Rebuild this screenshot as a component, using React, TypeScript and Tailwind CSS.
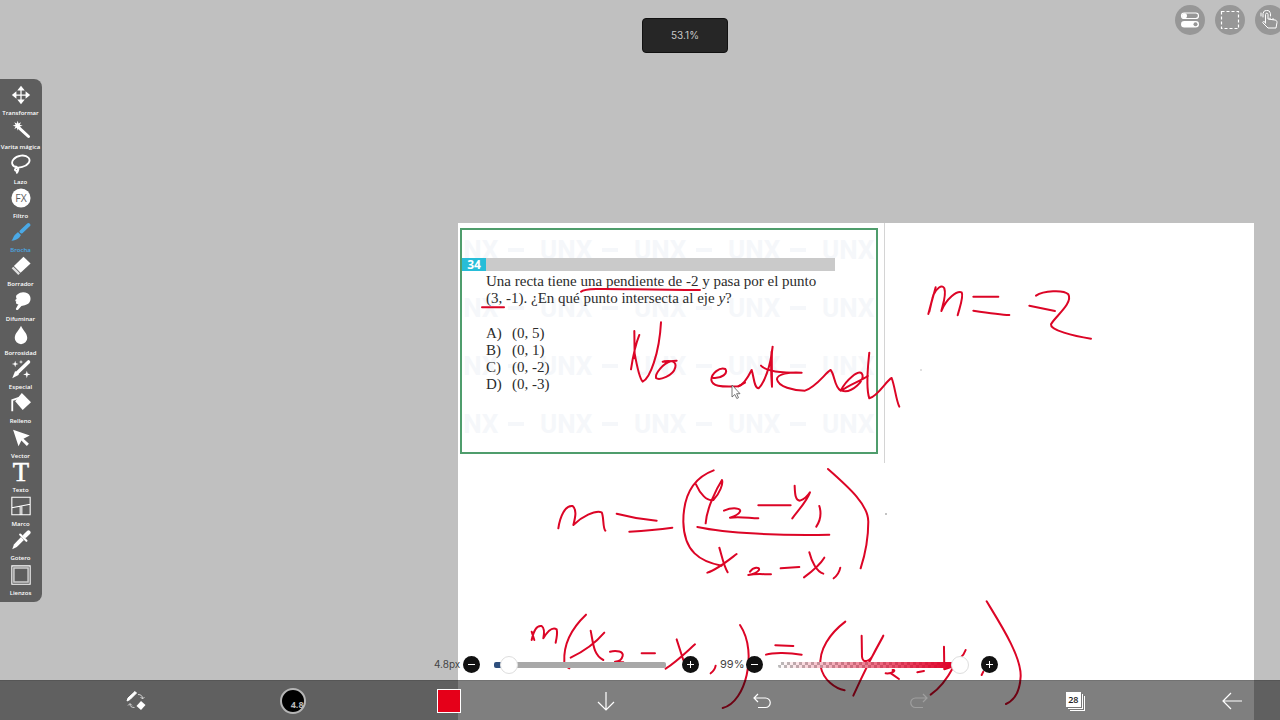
import React, { useState } from "react";

type Tool = { label: string; icon: React.ReactNode };

const TOOLS: Tool[] = [
  {
    label: "Transformar",
    icon: (
      <>
        <path d="M12 5v14M5 12h14" stroke="currentColor" strokeWidth="1.500" />
        <path d="M12 1l4.500 5.500h-9zM12 23l4.500-5.500h-9zM1 12l5.500-4.500v9zM23 12l-5.500-4.500v9z" fill="currentColor" />
      </>
    ),
  },
  {
    label: "Varita mágica",
    icon: (
      <>
        <path d="M10 11l11 10" stroke="currentColor" strokeWidth="3.600" strokeLinecap="round" />
        <path
          d="M8 2l1 3.500 3-1.500-1.500 3 3.500 1-3.500 1 1.500 3-3-1.500-1 3.500-1-3.500-3 1.500 1.500-3-3.500-1 3.500-1-1.500-3 3 1.500z"
          fill="currentColor"
        />
      </>
    ),
  },
  {
    label: "Lazo",
    icon: (
      <path
        d="M7 16C1 15 0 10 3 6.500 7 1.500 17 0 21 4.500c3.500 4-1 9.500-7.500 11-3 .8-7 .8-8.500 2.500-1 2 1.500 3 3 2 2-1.500 0-4-2-5M8 19c1 1.500 0 2.500-1 3.500"
        fill="none"
        stroke="currentColor"
        strokeWidth="2.200"
        strokeLinecap="round"
      />
    ),
  },
  {
    label: "Filtro",
    icon: (
      <>
        <circle cx="12" cy="12" r="11.500" fill="currentColor" />
        <text x="12" y="16.500" textAnchor="middle" fontSize="12.500" fontWeight="400" fill="#5e5e5e">
          FX
        </text>
      </>
    ),
  },
  {
    label: "Brocha",
    icon: (
      <>
        <path d="M12.500 11.500l8.500-8" stroke="currentColor" strokeWidth="4.500" strokeLinecap="round" />
        <path d="M8.500 12l3.500 3.500-2 3c-2 2-6 4-9.500 4 2-2 2-5 4-7z" fill="currentColor" />
        <path d="M9 12l3.500 3.500" stroke="#5e5e5e" strokeWidth="0.800" />
      </>
    ),
  },
  {
    label: "Borrador",
    icon: (
      <>
        <path d="M15 1l8.500 8-12 11-8-8z" fill="currentColor" />
        <path d="M2.800 12.800l8 8-2 2L.800 14.800z" fill="currentColor" opacity="0.800" />
      </>
    ),
  },
  {
    label: "Difuminar",
    icon: (
      <path
        d="M8 4c4-4 13-3 15 2.500 1.500 5-1 9.500-6.500 10.500l-4 1-4 4.500c-1.500 1-3 0-2.500-1.500L9 15.500c-2 1-4-1-2.500-2.500-2-1-1.500-3 .3-3.500C5.500 7 6 5 8 4z"
        fill="currentColor"
      />
    ),
  },
  {
    label: "Borrosidad",
    icon: <path d="M12 1c2 5 7.500 9 7.500 14.500a7.500 7.500 0 01-15 0C4.500 10 10 6 12 1z" fill="currentColor" />,
  },
  {
    label: "Especial",
    icon: (
      <>
        <path d="M7 17L21 3.500" stroke="currentColor" strokeWidth="4.200" strokeLinecap="round" />
        <path d="M5 14.500l4.500 4.500L1.500 23z" fill="currentColor" />
        <path
          d="M5 2l.9 3.100L9 6l-3.100.9L5 10l-.9-3.100L1 6l3.100-.9zM19 14l1 3.500 3.500 1-3.500 1-1 3.500-1-3.500-3.500-1 3.500-1zM12 1l.6 1.900 1.900.6-1.900.6L12 6l-.6-1.900-1.900-.6 1.900-.6z"
          fill="currentColor"
        />
      </>
    ),
  },
  {
    label: "Relleno",
    icon: (
      <>
        <path d="M13 0l11 11-10 9.500L5 10z" fill="currentColor" />
        <path d="M12 5L1.500 8.500V22" fill="none" stroke="currentColor" strokeWidth="2.200" />
      </>
    ),
  },
  {
    label: "Vector",
    icon: <path d="M2.500 2l20 7-7.500 4 6.500 6-2.500 2.500-6.500-6.500L9 22z" fill="currentColor" />,
  },
  {
    label: "Texto",
    icon: (
      <text
        x="12"
        y="22.500"
        textAnchor="middle"
        fontSize="32"
        fontWeight="400"
        fontFamily="'Liberation Serif', serif"
        fill="currentColor"
        stroke="currentColor"
        strokeWidth="0.700"
      >
        T
      </text>
    ),
  },
  {
    label: "Marco",
    icon: (
      <path
        d="M1 1.500h22v21H1zM1 14L23 10M11 12.500V22M13 12V22"
        fill="none"
        stroke="currentColor"
        strokeWidth="1.300"
      />
    ),
  },
  {
    label: "Gotero",
    icon: (
      <>
        <path d="M17 7l4-4" stroke="currentColor" strokeWidth="5" strokeLinecap="round" />
        <path d="M11 5.500l7.500 7.500" stroke="currentColor" strokeWidth="2.600" strokeLinecap="round" />
        <path d="M12 8.500l3.500 3.500L7 20.500 1.500 23 3.500 17.500z" fill="currentColor" />
      </>
    ),
  },
  {
    label: "Lienzos",
    icon: (
      <>
        <path d="M1 1h22v22H1z" fill="none" stroke="currentColor" strokeWidth="1.300" />
        <path d="M3.500 3.500h17v17h-17z" fill="none" stroke="currentColor" strokeWidth="1.800" opacity="0.700" />
      </>
    ),
  },
];

// Ink strokes, drawn at three times the canvas scale
const INK = [
  {
    x: 600,
    y: 220,
    strokes: [
      "M-57 215C-40 200 60 210 300 210",
      "M-354 262L-288 262",
      "M103 333L104 415M118 345C108 370 98 415 93 448M103 395C110 435 118 475 128 485C150 475 178 400 183 307",
      "M188 425L230 422M212 424C190 430 165 460 168 474C178 482 220 468 226 442C230 425 215 420 192 424",
      "M340 474C365 476 385 460 376 447C360 440 334 460 334 480C336 498 360 502 415 499C430 495 445 470 455 450C462 470 462 505 476 505C492 490 512 440 518 380C510 420 514 470 516 500",
      "M415 499L435 488M515 395L516 495",
      "M483 437C500 455 540 458 605 458C570 455 530 462 531 478C535 500 580 512 615 512C650 500 675 460 692 450C705 465 702 500 722 512C740 478 775 450 785 460C800 478 755 522 725 512C745 495 785 482 803 468",
      "M808 398C804 440 796 500 808 535C835 528 860 480 875 474C885 500 888 540 898 560",
    ],
  },
  {
    x: 900,
    y: 260,
    strokes: [
      "M107 82L85 162L100 105C110 85 125 72 133 85C140 105 128 135 124 153C140 115 170 92 185 97C192 110 178 145 173 166M88 155L98 112",
      "M220 110L295 110M220 152C260 158 300 164 328 165",
      "M388 137L465 153M408 107C430 92 490 88 505 103C520 130 465 170 453 193C450 210 520 228 573 236",
    ],
  },
  {
    x: 540,
    y: 455,
    strokes: [
      "M55 220C60 185 75 150 98 153C112 165 105 190 100 210C125 185 165 165 185 172C192 185 188 220 196 227",
      "M230 176Q290 192 350 197M268 230Q340 226 397 218",
      "M521 46C470 65 430 110 430 200C432 290 480 320 545 332",
      "M468 88C480 115 500 140 520 135C540 115 550 85 546 75C530 100 500 160 497 205",
      "M552 167C580 155 605 160 600 170C595 180 580 185 570 188C600 183 630 190 655 190M655 151L752 151",
      "M764 92C765 115 765 135 780 137C795 132 805 120 810 112C800 140 775 165 757 190",
      "M838 153C845 175 842 195 829 215M472 216C560 235 720 242 868 239",
      "M864 42C930 100 985 150 985 200C985 260 975 300 962 340",
      "M538 278C545 300 550 330 563 352M590 297C560 320 530 345 502 353",
      "M630 350C640 335 660 335 657 345C650 355 635 358 625 360C650 355 670 358 693 358M722 340L778 336",
      "M808 292C815 320 830 350 850 356M853 308C840 330 815 350 792 367M901 338Q897 358 881 370",
    ],
  },
  {
    x: 420,
    y: 590,
    strokes: [
      "M335 150C340 125 350 105 365 108C375 115 372 135 370 145C385 120 400 112 410 118C413 130 410 145 407 158M335 125L343 150",
      "M498 74C460 110 430 160 433 215Q436 230 448 235",
      "M512 122C520 160 520 195 550 210M553 128C530 155 490 185 452 203",
      "M570 185C590 180 612 185 608 198C605 210 595 215 585 215L610 217M665 190L705 190",
      "M770 148L790 210M825 163C800 185 770 215 737 236M887 227Q885 240 872 250",
    ],
  },
  {
    x: 710,
    y: 590,
    strokes: [
      "M90 105C120 150 120 210 110 255C100 300 75 345 38 354",
      "M196 166L250 168M168 194C190 186 240 188 275 194",
      "M406 95C360 130 325 180 332 230C340 270 375 295 404 301",
      "M455 137L456 200C458 222 480 215 492 190L520 137C490 190 460 250 430 317M518 142L478 215",
      "M527 250C550 252 560 238 548 240M543 250L567 267M622 247L642 243",
      "M702 170L703 238L732 228C715 260 690 295 662 314M767 180Q762 195 750 205M820 245L815 255",
      "M830 34C870 100 935 200 932 260C930 300 915 330 888 342",
    ],
  },
];

const ANSWERS = [
  ["A)", "(0, 5)"],
  ["B)", "(0, 1)"],
  ["C)", "(0, -2)"],
  ["D)", "(0, -3)"],
];

const Watermark = () => (
  <div
    aria-hidden
    className="absolute top-0 -left-4 flex flex-col gap-[18px] font-['Liberation_Sans_Narrow','Roboto',sans-serif] text-[26px] leading-10 font-bold text-[#f5f7fa]"
  >
    {[0, 1, 2, 3].map((row) => (
      <div key={row} className="flex">
        {[0, 1, 2, 3, 4].map((col) => (
          <span key={col} className="flex w-[94px] shrink-0 items-center justify-between pr-4">
            UNX
            <i className="h-1 w-4 bg-[#f5f7fa]" />
          </span>
        ))}
      </div>
    ))}
  </div>
);

const Question = () => (
  <section className="relative h-[226px] w-[418px] overflow-hidden border-2 border-[#4f9d6c]">
    <Watermark />
    <div className="relative pt-7">
      <div className="mr-[41px] flex h-[13px] bg-[#cacaca]">
        <span className="w-6 bg-[#27bdd8] text-center font-['Noto_Sans',sans-serif] text-[12px] leading-[13px] font-bold text-white">
          34
        </span>
      </div>
      <div className="pl-6 font-['Liberation_Serif',serif] text-[15px] leading-[17px] text-[#2c2c2c]">
        <p className="pt-0.5 whitespace-nowrap">
          Una recta tiene una pendiente de -2 y pasa por el punto
          <br />
          (3, -1). ¿En qué punto intersecta al eje <em>y</em>?
        </p>
        <ul className="mt-[18px]">
          {ANSWERS.map(([letter, value]) => (
            <li key={letter} className="flex">
              <span className="w-[26px]">{letter}</span>
              {value}
            </li>
          ))}
        </ul>
      </div>
    </div>
  </section>
);

const Canvas = () => (
  <div className="absolute top-[223px] right-[26px] bottom-0 left-[458px] bg-white">
    <div className="h-60 w-[427px] border-r border-[#d4d4d4] pt-[5px] pl-0.5">
      <Question />
    </div>
    <svg
      className="absolute top-0 left-0 h-[497px] w-[796px]"
      viewBox="458 223 796 497"
      fill="none"
      aria-hidden
    >
      {INK.map((group) => (
        <g
          key={`${group.x}-${group.y}`}
          transform={`translate(${group.x} ${group.y}) scale(0.3333)`}
          stroke="#dc0526"
          strokeWidth="6"
          strokeLinecap="round"
          strokeLinejoin="round"
        >
          {group.strokes.map((d) => (
            <path key={d} d={d} />
          ))}
        </g>
      ))}
      <circle cx="886" cy="514" r="0.8" fill="#777" />
      <circle cx="921" cy="370" r="0.7" fill="#aaa" />
      <path
        d="M732 385v12l2.800-2.500 2 4 1.700-.8-1.900-4h3.400z"
        fill="#fff"
        stroke="#555"
        strokeWidth="0.8"
      />
    </svg>
  </div>
);

const roundButton =
  "flex size-[30px] shrink-0 items-center justify-center rounded-full bg-[#979797] text-white";

const TopBar = () => (
  <header className="flex h-[79px] items-start justify-end gap-[10px] pt-[5px]">
    <output className="absolute top-[18px] left-1/2 ml-0.5 flex h-[35px] w-[86px] items-center justify-center rounded-sm border border-[#111] bg-[#262626] font-['Inter',sans-serif] text-[10px] text-[#c8c8c8]">
      53.1%
    </output>
    <button className={roundButton} aria-label="Ajustes">
      <svg className="size-5" viewBox="0 0 20 20" fill="none">
        <rect x="1.500" y="3" width="17" height="5.500" rx="2.750" stroke="currentColor" strokeWidth="1.200" />
        <circle cx="4.500" cy="5.750" r="2.500" fill="currentColor" />
        <rect x="1" y="11" width="18" height="6.500" rx="3.250" fill="currentColor" />
        <circle cx="15.500" cy="14.250" r="2" fill="#979797" />
      </svg>
    </button>
    <button className={roundButton} aria-label="Selección">
      <svg className="size-5" viewBox="0 0 20 20" fill="none">
        <rect x="1.500" y="1.500" width="17" height="17" stroke="currentColor" strokeWidth="1.200" strokeDasharray="3 2" />
      </svg>
    </button>
    <button className={`${roundButton} -mr-[5px] pr-0.5`} aria-label="Gestos">
      <svg className="size-5" viewBox="0 0 20 20" fill="none" stroke="currentColor" strokeLinecap="round" strokeLinejoin="round">
        <path d="M6.500 13V4.500c0-1.800 2.500-1.800 2.500 0V9l7 1c1.500.3 2 1 2 2.500l-1 5.500H9l-5-5c-.8-1.200.5-2 1.500-1.300zM11 9.300V8M14 9.700V8.500" />
        <path d="M4 7V3.500a3.800 3.800 0 017.500 0V6M2 6V3" />
      </svg>
    </button>
  </header>
);

const ToolBar = () => {
  const [active, setActive] = useState("Brocha");

  return (
    <nav className="flex h-[523px] w-[42px] flex-col rounded-r-lg bg-[#5e5e5e] pt-1 pr-px pb-[5px]">
      {TOOLS.map(({ label, icon }) => (
        <button
          key={label}
          onClick={() => setActive(label)}
          className={`flex flex-1 flex-col items-center font-['Open_Sans',sans-serif] text-[6px] leading-2 font-semibold whitespace-nowrap ${
            active === label ? "text-[#4aa9e6]" : "text-white"
          }`}
        >
          <svg className="mt-0.5 mb-1 size-5 shrink-0" viewBox="0 0 24 24" fill="none" aria-hidden>
            {icon}
          </svg>
          {label}
        </button>
      ))}
    </nav>
  );
};

const StepButton = ({ sign, label }: { sign: "+" | "-"; label: string }) => (
  <button aria-label={label} className="flex size-[17px] shrink-0 items-center justify-center rounded-full bg-[#111] text-white">
    <svg className="size-[9px]" viewBox="0 0 9 9" stroke="currentColor" strokeWidth="1">
      <path d={sign === "+" ? "M1 4.500h7M4.500 1v7" : "M1 4.500h7"} />
    </svg>
  </button>
);

const rangeClass =
  "h-[18px] appearance-none bg-transparent [&::-webkit-slider-runnable-track]:h-1.5 [&::-webkit-slider-runnable-track]:rounded-xs [&::-webkit-slider-thumb]:-mt-1.5 [&::-webkit-slider-thumb]:size-[18px] [&::-webkit-slider-thumb]:appearance-none [&::-webkit-slider-thumb]:rounded-full [&::-webkit-slider-thumb]:border [&::-webkit-slider-thumb]:border-[#dedede] [&::-webkit-slider-thumb]:bg-white";

const BrushSliders = () => {
  const [size, setSize] = useState(4);
  const [opacity, setOpacity] = useState(99);

  return (
    <div className="mt-auto flex h-[31px] items-center justify-center pl-[152px] font-['Inter',sans-serif] text-[10px] text-[#444]">
      <label htmlFor="size" className="w-[29px]">
        4.8px
      </label>
      <StepButton sign="-" label="Reducir grosor" />
      <input
        id="size"
        type="range"
        value={size}
        onChange={(e) => setSize(Number(e.target.value))}
        className={`${rangeClass} mr-4 ml-[14px] w-[172px] [&::-webkit-slider-runnable-track]:bg-[linear-gradient(to_right,#2f4f7d_8%,#a8a8a8_8%)]`}
      />
      <StepButton sign="+" label="Aumentar grosor" />
      <label htmlFor="opacity" className="ml-[21px] w-[26px] text-[11px]">
        {opacity}%
      </label>
      <StepButton sign="-" label="Reducir opacidad" />
      <input
        id="opacity"
        type="range"
        value={opacity}
        onChange={(e) => setOpacity(Number(e.target.value))}
        className={`${rangeClass} mr-[10px] ml-[15px] w-[193px] [&::-webkit-slider-runnable-track]:bg-[linear-gradient(to_right,#e0002800,#e00028_90%,#e00028_95%,#fff_95%),repeating-conic-gradient(#bbb_0_25%,#fff_0_50%)] [&::-webkit-slider-runnable-track]:bg-[length:100%_100%,6px_6px]`}
      />
      <StepButton sign="+" label="Aumentar opacidad" />
    </div>
  );
};

const footerButton = "flex size-[26px] items-center justify-center text-white";

const BottomBar = () => (
  <footer className="flex h-10 items-center justify-between border-t border-black/10 bg-black/50 pr-[35px] pl-[123px]">
    <button className={footerButton} aria-label="Alternar pincel y borrador">
      <svg className="size-5" viewBox="0 0 20 20" fill="none" stroke="currentColor">
        <path d="M1 10l1-3L9 .500l1.500 1.500L4 8.500z" fill="currentColor" />
        <path d="M10.500 15l4.500-5 4.500 4-4.500 5z" fill="currentColor" stroke="none" />
        <path d="M12 3.500c3 0 4.500 1.500 4.500 4M14.500 6l2 2 2-2M8.500 16.500c-3 0-4.500-1-4.500-3.500M2 14.500l2-2 2 2" opacity="0.700" />
      </svg>
    </button>
    <button className={`${footerButton} relative rounded-full border-2 border-[#b5b5b5] bg-black`} aria-label="Pincel">
      <span className="absolute right-0 bottom-px font-['Open_Sans',sans-serif] text-[9px] leading-3 font-bold text-[#bbb]">
        4.8
      </span>
    </button>
    <button className={footerButton} aria-label="Color">
      <span className="size-6 border border-white bg-[#e50019]" />
    </button>
    <button className={footerButton} aria-label="Bajar">
      <svg className="size-5" viewBox="0 0 20 20" fill="none" stroke="currentColor" strokeWidth="1.200">
        <path d="M10 1v18M2 11l8 8 8-8" />
      </svg>
    </button>
    <button className={footerButton} aria-label="Deshacer">
      <svg className="size-5" viewBox="0 0 20 20" fill="none" stroke="currentColor" strokeWidth="1.200">
        <path d="M6 3L2 7l4 4M2 7h11.500a4.500 4.500 0 010 9.500H6" />
      </svg>
    </button>
    <button className={`${footerButton} opacity-25`} aria-label="Rehacer">
      <svg className="size-5" viewBox="0 0 20 20" fill="none" stroke="currentColor" strokeWidth="1.200">
        <path d="M14 3l4 4-4 4M18 7H6.500a4.500 4.500 0 000 9.500H14" />
      </svg>
    </button>
    <button className={`${footerButton} font-['Open_Sans',sans-serif] text-[9px] font-semibold`} aria-label="Capas">
      <span className="mr-1 -mt-0.5 flex size-[15px] items-center justify-center bg-white text-[#222] shadow-[1px_1px_0_#777,2px_2px_0_#fff,3px_3px_0_#777,4px_4px_0_#fff]">
        28
      </span>
    </button>
    <button className={footerButton} aria-label="Volver">
      <svg className="size-5" viewBox="0 0 20 20" fill="none" stroke="currentColor" strokeWidth="1.200">
        <path d="M20 10H1M9 2l-8 8 8 8" />
      </svg>
    </button>
  </footer>
);

const App: React.FC = () => {
  return (
    <main className="relative h-screen overflow-hidden bg-[#c0c0c0]">
      <Canvas />
      <div className="relative flex h-full flex-col">
        <TopBar />
        <ToolBar />
        <BrushSliders />
        <BottomBar />
      </div>
    </main>
  );
};

export default App;
